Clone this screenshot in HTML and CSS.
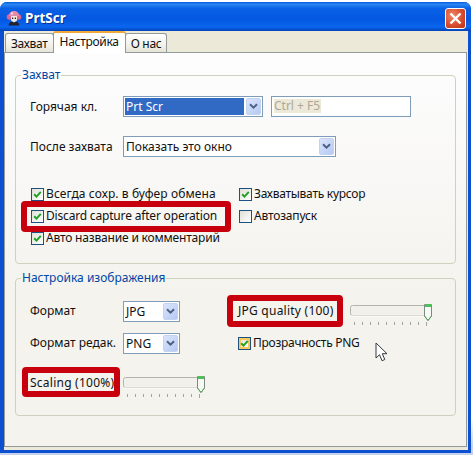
FILE: index.html
```html
<!DOCTYPE html>
<html lang="ru">
<head>
<meta charset="utf-8">
<title>PrtScr</title>
<link rel="stylesheet" href="styles.css">
</head>
<body>
<svg class="defs" width="0" height="0" aria-hidden="true">
  <symbol id="chev" viewBox="0 0 9 7"><path d="M1 1.2 4.5 4.7 8 1.2" fill="none" stroke="#4d6185" stroke-width="2"/></symbol>
  <symbol id="tick" viewBox="0 0 13 13"><path d="M2.6 6.2 5.3 9 10.400 3.400" fill="none" stroke="#21a121" stroke-width="2.300"/></symbol>
  <symbol id="slider" viewBox="0 0 84 24">
    <rect x="0.500" y="2.500" width="76" height="10" rx="2" fill="#f1f0ea" stroke="#b4b4ac"/>
    <path d="M1 13H76" stroke="#fff"/>
    <path d="M4.500 19v3M12.500 19v3M20.500 19v3M28.500 19v3M36.500 19v3M44.500 19v3M52.500 19v3M60.500 19v3M68.500 19v3M76.500 19v4" stroke="#a4a49c"/>
    <path d="M74.500 1.500h7v11.500l-3.500 4.500-3.500-4.500z" fill="#f8f8f4" stroke="#7d8a82"/>
    <path d="M74.500 13l3.500 4.500 3.500-4.500" fill="none" stroke="#4fa55b"/>
    <path d="M75 1h6v3h-6z" fill="#4fbf5b"/>
  </symbol>
</svg>
<div class="window">
  <header class="titlebar">
    <svg class="appicon" viewBox="0 0 16 16" aria-hidden="true">
      <path d="M4 12h8l1.500 3.500h-11z" fill="#26222a"/>
      <circle cx="3.500" cy="7" r="2.800" fill="#d9698f"/>
      <circle cx="12.500" cy="7" r="2.800" fill="#d9698f"/>
      <path d="M3 6C3 2.500 5 1 8 1s5 1.500 5 5z" fill="#e48aa8"/>
      <circle cx="6" cy="3.500" r="1.200" fill="#f7d2de"/>
      <path d="M5 6h6v4.500L8 12.500 5 10.500z" fill="#f3e6dc"/>
      <path d="M6 7.500h1.200v1.500H6zM8.800 7.500H10v1.500H8.800z" fill="#26222a"/>
    </svg>
    <span class="title">PrtScr</span>
    <button class="close" aria-label="Закрыть">
      <svg viewBox="0 0 13 13" aria-hidden="true"><path d="M1.500 1.500 11.500 11.500M11.500 1.500 1.500 11.500" stroke="#fff" stroke-width="2.400"/></svg>
    </button>
  </header>
  <div class="client">
    <nav class="tabs">
      <span class="tab">Захват</span>
      <span class="tab active">Настройка</span>
      <span class="tab">О нас</span>
    </nav>
    <main class="page">
      <fieldset class="group capture">
        <legend>Захват</legend>
        <div class="form-row first">
          <span class="label">Горячая кл.</span>
          <div class="combo hotkey"><span class="value selected">Prt Scr</span><span class="drop"><svg><use href="#chev"/></svg></span></div>
          <div class="textbox"><span>Ctrl + F5</span></div>
        </div>
        <div class="form-row second">
          <span class="label">После захвата</span>
          <div class="combo after"><span class="value">Показать это окно</span><span class="drop"><svg><use href="#chev"/></svg></span></div>
        </div>
        <div class="checks">
          <label class="check wider"><span class="box"><svg><use href="#tick"/></svg></span>Всегда сохр. в буфер обмена</label>
          <label class="check tighter"><span class="box"><svg><use href="#tick"/></svg></span>Захватывать курсор</label>
          <label class="check tight"><span class="box"><svg><use href="#tick"/></svg></span>Discard capture after operation<span class="mark mark-discard"></span></label>
          <label class="check tight"><span class="box"></span>Автозапуск</label>
          <label class="check tight"><span class="box"><svg><use href="#tick"/></svg></span>Авто название и комментарий</label>
        </div>
      </fieldset>
      <fieldset class="group image">
        <legend>Настройка изображения</legend>
        <div class="image-grid">
          <span class="label">Формат</span>
          <div class="combo small"><span class="value">JPG</span><span class="drop"><svg><use href="#chev"/></svg></span></div>
          <span class="label marked quality">JPG quality (100)<span class="mark mark-quality"></span></span>
          <svg class="slider top"><use href="#slider"/></svg>
          <span class="label">Формат редак.</span>
          <div class="combo small"><span class="value">PNG</span><span class="drop"><svg><use href="#chev"/></svg></span></div>
          <label class="check png tighter"><span class="box hot"><svg><use href="#tick"/></svg></span>Прозрачность PNG</label>
          <span class="label marked scaling">Scaling (100%)<span class="mark mark-scaling"></span></span>
          <svg class="slider wide"><use href="#slider"/></svg>
        </div>
        <svg class="cursor" viewBox="0 0 13 20" aria-hidden="true"><path d="M1 1v15l3.500-3.300 2.500 6 2.800-1.200-2.500-5.800H12z" fill="#fff" stroke="#333a40"/></svg>
      </fieldset>
    </main>
  </div>
</div>
</body>
</html>
```
FILE: styles.css
```css
* { box-sizing: border-box; }
html, body { margin: 0; padding: 0; background: #fff; }
body { width: 473px; height: 455px; overflow: hidden; padding-top: 2px; font: 12px/16px "Noto Sans", sans-serif; color: #111; background: linear-gradient(#fff 92%, #c6d2ec 98%); }
.defs { position: absolute; }

.window { width: 471px; height: 451px; display: flex; flex-direction: column; background: #0c4fd0; border-radius: 7px 7px 0 0; overflow: hidden; }
.titlebar { height: 29px; flex: none; display: flex; align-items: center; padding: 3px 5px 0 6px; background: linear-gradient(#0a5ce0 0, #2a86f2 8%, #0a62e6 22%, #0457e2 60%, #0a66ee 86%, #0342b8 100%); }
.appicon { width: 16px; height: 16px; }
.title { margin-left: 3px; font: bold 13.5px/18px "Noto Sans", sans-serif; color: #fff; text-shadow: 1px 1px 0 #0a2f90; flex: 1; }
.close { width: 21px; height: 21px; padding: 3px; border: 1px solid #fff; border-radius: 3px; background: radial-gradient(circle at 35% 35%, #ee8a6a, #d6482a 60%, #b73414); display: block; }
.close svg { display: block; width: 13px; height: 13px; }

.client { flex: 1; margin: 0 3px 3px 4px; background: #ece9d8; display: flex; flex-direction: column; min-height: 0; }
.tabs { height: 21px; flex: none; display: flex; align-items: flex-end; padding-left: 1px; position: relative; z-index: 1; letter-spacing: -0.3px; }
.tab { height: 19px; padding: 2px 5px 0; border: 1px solid #919b9c; border-bottom: 0; border-radius: 3px 3px 0 0; background: linear-gradient(#fff, #f1efe6 70%, #e5e3d6); margin-right: -1px; white-space: nowrap; }
.tab.active { height: 22px; margin-bottom: -1px; padding: 1px 6px 0; background: #fff; border-top: 2px solid #f0a83a; position: relative; z-index: 2; }

.page { height: 395px; flex: none; margin-right: 1px; border: 1px solid #919b9c; background: linear-gradient(#fdfdfe, #f4f3ee 60%); padding: 14px 10px 0; }
fieldset.group { margin: 0; padding: 0; min-width: 0; border: 1px solid #d0d0bf; border-radius: 4px; position: relative; width: 441px; }
legend { margin-left: 5px; padding: 0 1px; height: 16px; color: #0046a5; white-space: nowrap; }
.capture { height: 197px; padding: 0; }
.image { height: 146px; margin-top: 6px !important; }

.label { white-space: nowrap; }
.form-row { display: flex; align-items: center; height: 21px; padding-left: 14px; }
.form-row.first { margin-top: 13px; }
.form-row.second { margin-top: 19px; }
.form-row .label { width: 93px; flex: none; padding-top: 1px; }

.combo { height: 21px; display: flex; align-items: center; background: #fff; border: 1px solid #7f9db9; padding: 1px; }
.hotkey { width: 140px; }
.after { width: 213px; }
.small { width: 57px; }
.value { flex: 1; height: 17px; padding-left: 1px; line-height: 17px; white-space: nowrap; overflow: hidden; }
.value.selected { background: #316ac5; color: #fff; }
.drop { width: 15px; height: 17px; flex: none; margin-left: 2px; display: flex; align-items: center; justify-content: center; border: 1px solid #c4d2f0; border-radius: 2px; background: linear-gradient(135deg, #dbe5fb, #b6c9f4); }
.drop svg { width: 9px; height: 7px; display: block; }
.textbox { width: 140px; height: 21px; margin-left: 8px; border: 1px solid #7f9db9; background: #fff; padding: 2px; }
.textbox span { display: block; width: 47px; height: 14px; line-height: 14px; background: #ece9d8; color: #aca899; white-space: nowrap; }

.checks { margin-top: 26px; padding-left: 15px; display: grid; grid-template-columns: 208px auto; grid-auto-rows: 22px; }
.check { display: flex; align-items: center; gap: 2px; position: relative; white-space: nowrap; }
.tight { letter-spacing: -0.18px; }
.tighter { letter-spacing: -0.27px; }
.wider { letter-spacing: 0.1px; }
.box { width: 13px; height: 13px; flex: none; border: 1px solid #1c5180; background: linear-gradient(135deg, #e0e0d8, #fff); }
.box svg { display: block; width: 11px; height: 11px; }
.box.hot { box-shadow: inset 0 0 0 2px #f8c85a; }
.mark { position: absolute; border: 6px solid #c8000e; border-radius: 4px; pointer-events: none; }
.mark-discard { left: -10px; top: -4px; width: 210px; height: 31px; }

.image-grid { margin-top: 14px; padding-left: 14px; display: grid; grid-template-columns: 93px 57px 58px 112px 84px; grid-template-rows: 22px 22px 35px; row-gap: 10px; align-items: center; }
.marked { position: relative; letter-spacing: 0.24px; }
.quality { grid-column: 4; }
.scaling { grid-column: 1; align-self: start; margin-top: 11px; }
.mark-quality { left: -11px; top: -8px; width: 116px; height: 32px; }
.mark-scaling { left: -8px; top: -8px; width: 98px; height: 30px; }
.slider { width: 84px; height: 24px; display: block; }
.top { grid-column: 5; align-self: start; margin-top: 3px; }
.wide { grid-column: 2 / span 2; align-self: end; }
.png { grid-column: 4 / span 2; }
.cursor { position: absolute; left: 359px; top: 56px; width: 13px; height: 20px; }
```
